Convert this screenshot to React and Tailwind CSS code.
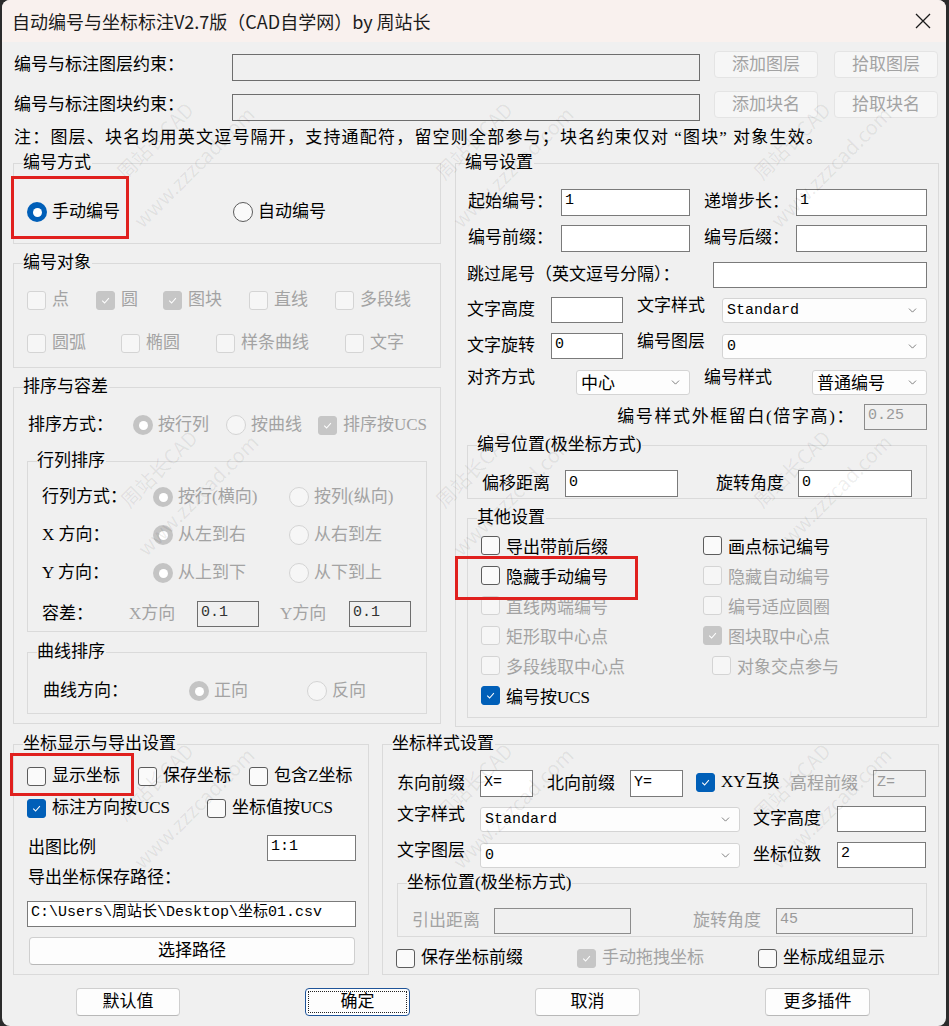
import React from 'react';
import { ChevronDown } from 'lucide-react';

const mono = "font-['Liberation_Mono','Noto_Sans_CJK_SC',monospace]";

function Group({ title, className = '', children }) {
  return (
    <div className={`relative border border-[#dadada] ${className}`}>
      <span className="absolute left-[9px] top-[-13px] bg-[#f0f0f0] pr-[1px] leading-[24px] text-black">{title}</span>
      {children}
    </div>
  );
}

function Check({ label, checked, disabled, className = '' }) {
  const box = checked
    ? disabled
      ? 'border-[#c6c6c6] bg-[#c6c6c6]'
      : 'border-[#005fb8] bg-[#005fb8]'
    : disabled
      ? 'border-[#d4d4d4] bg-[#f6f6f6]'
      : 'border-[#5c5c5c] bg-[#fafafa]';
  return (
    <div className={`flex h-[24px] items-center ${className}`}>
      <span className={`flex h-[19px] w-[19px] shrink-0 items-center justify-center rounded-[3px] border ${box}`}>
        {checked && (
          <svg width="11" height="11" viewBox="0 0 12 12">
            <path d="M2.4 6.2 L5 8.7 L9.7 3.5" fill="none" stroke="white" strokeWidth="1.1" />
          </svg>
        )}
      </span>
      <span className={`ml-[6px] whitespace-nowrap ${disabled ? 'text-[#a3a3a3]' : 'text-black'}`}>{label}</span>
    </div>
  );
}

function Radio({ label, checked, disabled, className = '' }) {
  const ring = checked
    ? disabled
      ? 'bg-[#c4c4c4]'
      : 'bg-[#005fb8]'
    : disabled
      ? 'border border-[#d4d4d4] bg-[#f6f6f6]'
      : 'border border-[#5c5c5c] bg-[#fafafa]';
  return (
    <div className={`flex h-[24px] items-center ${className}`}>
      <span className={`flex h-[20px] w-[20px] shrink-0 items-center justify-center rounded-full ${ring}`}>
        {checked && <span className="h-[9px] w-[9px] rounded-full bg-white" />}
      </span>
      <span className={`ml-[5px] whitespace-nowrap ${disabled ? 'text-[#a3a3a3]' : 'text-black'}`}>{label}</span>
    </div>
  );
}

function Edit({ value = '', className = '', disabled, readOnly }) {
  const tone = disabled
    ? 'border-[#8c8c8c] bg-[#f0f0f0] text-[#9a9a9a]'
    : readOnly
      ? 'border-[#6e6e6e] bg-[#f0f0f0] text-[#333]'
      : 'border-[#7a7a7a] bg-white text-black';
  return (
    <div className={`flex shrink-0 items-center border pb-[2px] pl-[3px] ${mono} text-[15px] ${tone} ${className}`}>
      {value}
    </div>
  );
}

function Combo({ value, cjk, className = '' }) {
  return (
    <div className={`flex shrink-0 items-center justify-between rounded-[3px] border border-[#d4d4d4] bg-[#fdfdfd] pl-[4px] pr-[7px] ${className}`}>
      <span className={cjk ? 'pt-[3px]' : `${mono} pt-[2px] text-[15px]`}>{value}</span>
      <ChevronDown size={13} strokeWidth={1.4} className="text-[#5a5a5a]" />
    </div>
  );
}

function Btn({ children, disabled, focused, className = '' }) {
  const tone = disabled
    ? 'border-[#e4e4e4] bg-[#f6f6f6] text-[#a3a3a3]'
    : focused
      ? 'border-[#1f5499] bg-[#fdfdfd] text-black'
      : 'border-[#cfcfcf] border-b-[#b8b8b8] bg-[#fdfdfd] text-black';
  return (
    <div className={`flex shrink-0 items-center justify-center rounded-[4px] border ${tone} ${className}`}>
      {focused ? (
        <span className="flex h-[calc(100%-4px)] w-[calc(100%-4px)] items-center justify-center border border-dotted border-[#222]">
          {children}
        </span>
      ) : (
        children
      )}
    </div>
  );
}

function Label({ children, className = '', dim }) {
  return <span className={`shrink-0 whitespace-nowrap ${dim ? 'text-[#a3a3a3]' : 'text-black'} ${className}`}>{children}</span>;
}

// faint diagonal site stamp printed over the dialog
function Stamp({ x, y }) {
  return (
    <div
      className="pointer-events-none absolute -translate-x-1/2 -translate-y-1/2 -rotate-45 whitespace-nowrap text-center font-['Noto_Sans_CJK_SC',sans-serif] text-[20px] leading-[24px] text-black/[0.07]"
      style={{ left: x, top: y }}
    >
      <div>周站长CAD</div>
      <div className="mt-[22px] pl-[18px]">www.zzzcad.com</div>
    </div>
  );
}

const stamps = [
  [171, 157], [490, 157], [808, 157],
  [175, 485], [490, 485], [808, 485],
  [171, 798], [490, 798], [808, 798],
];

export default function App() {
  return (
    <div className="relative h-[1026px] w-[949px] overflow-hidden bg-[#2b2b2b] font-['Liberation_Serif','Noto_Sans_CJK_SC',serif] text-[17px] leading-[24px] text-black">
      <div className="ml-[2px] h-full w-[944px] rounded-[8px] bg-[#f0f0f0]">
        {/* title bar */}
        <div className="flex h-[42px] items-center justify-between rounded-t-[8px] bg-[#f9f1ee] pl-[10px] pr-[15px]">
          <span className="font-['Noto_Sans_CJK_SC',sans-serif] text-[18px] text-[#1b1b1b]">
            自动编号与坐标标注V2.7版（CAD自学网）by 周站长
          </span>
          <svg width="16" height="16" viewBox="0 0 16 16">
            <path d="M1 1 L15 15 M15 1 L1 15" stroke="#1b1b1b" strokeWidth="1.3" />
          </svg>
        </div>

        <div className="pl-[11px]">
          {/* layer / block filters */}
          <div className="mt-[9px] flex h-[30px]">
            <Label className="ml-[1px] w-[218px] leading-[27px]">编号与标注图层约束：</Label>
            <Edit readOnly className="mt-[3px] h-[27px] w-[468px]" />
            <Btn disabled className="ml-[14px] h-[27px] w-[104px]">添加图层</Btn>
            <Btn disabled className="ml-[16px] h-[27px] w-[104px]">拾取图层</Btn>
          </div>
          <div className="mt-[10px] flex h-[30px]">
            <Label className="ml-[1px] w-[218px] leading-[27px]">编号与标注图块约束：</Label>
            <Edit readOnly className="mt-[3px] h-[27px] w-[468px]" />
            <Btn disabled className="ml-[14px] h-[27px] w-[104px]">添加块名</Btn>
            <Btn disabled className="ml-[16px] h-[27px] w-[104px]">拾取块名</Btn>
          </div>
          <p className="ml-[1px] mt-[5px] whitespace-nowrap tracking-[1.2px]">
            注：图层、块名均用英文逗号隔开，支持通配符，留空则全部参与；块名约束仅对<span className="mx-[5px]">“图块”</span>对象生效。
          </p>

          <div className="flex">
            {/* left column */}
            <div className="flex w-[428px] flex-col">
              <Group title="编号方式" className="mt-[13px] h-[81px]">
                <div className="flex pl-[13px] pt-[36px]">
                  <Radio checked label="手动编号" className="w-[206px]" />
                  <Radio label="自动编号" />
                </div>
              </Group>

              <Group title="编号对象" className="mt-[19px] h-[105px]">
                <div className="flex pl-[13px] pt-[24px]">
                  <Check disabled label="点" className="w-[69px]" />
                  <Check disabled checked label="圆" className="w-[67px]" />
                  <Check disabled checked label="图块" className="w-[86px]" />
                  <Check disabled label="直线" className="w-[86px]" />
                  <Check disabled label="多段线" />
                </div>
                <div className="mt-[19px] flex pl-[13px]">
                  <Check disabled label="圆弧" className="w-[94px]" />
                  <Check disabled label="椭圆" className="w-[95px]" />
                  <Check disabled label="样条曲线" className="w-[129px]" />
                  <Check disabled label="文字" />
                </div>
              </Group>

              <Group title="排序与容差" className="mt-[19px] h-[337px]">
                <div className="flex pl-[14px] pt-[25px]">
                  <Label className="w-[105px]">排序方式：</Label>
                  <Radio disabled checked label="按行列" className="w-[93px]" />
                  <Radio disabled label="按曲线" className="w-[92px]" />
                  <Check disabled checked label="排序按UCS" />
                </div>

                <Group title="行列排序" className="ml-[13px] mt-[24px] h-[171px] w-[400px]">
                  <div className="flex pl-[14px] pt-[23px]">
                    <Label className="w-[111px]">行列方式：</Label>
                    <Radio disabled checked label="按行(横向)" className="w-[136px]" />
                    <Radio disabled label="按列(纵向)" />
                  </div>
                  <div className="mt-[14px] flex pl-[14px]">
                    <Label className="w-[111px]">X 方向：</Label>
                    <Radio disabled checked label="从左到右" className="w-[136px]" />
                    <Radio disabled label="从右到左" />
                  </div>
                  <div className="mt-[14px] flex pl-[14px]">
                    <Label className="w-[111px]">Y 方向：</Label>
                    <Radio disabled checked label="从上到下" className="w-[136px]" />
                    <Radio disabled label="从下到上" />
                  </div>
                  <div className="mt-[16px] flex items-center pl-[14px]">
                    <Label className="w-[87px]">容差：</Label>
                    <Label dim className="w-[68px]">X方向</Label>
                    <Edit readOnly value="0.1" className="h-[26px] w-[62px]" />
                    <Label dim className="ml-[21px] w-[69px]">Y方向</Label>
                    <Edit readOnly value="0.1" className="h-[26px] w-[62px]" />
                  </div>
                </Group>

                <Group title="曲线排序" className="ml-[13px] mt-[20px] h-[62px] w-[400px]">
                  <div className="flex pl-[15px] pt-[26px]">
                    <Label className="w-[146px]">曲线方向：</Label>
                    <Radio disabled checked label="正向" className="w-[118px]" />
                    <Radio disabled label="反向" />
                  </div>
                </Group>
              </Group>
            </div>

            {/* numbering settings */}
            <Group title="编号设置" className="ml-[14px] mt-[13px] h-[564px] w-[484px]">
              <div className="mt-[24px] flex h-[28px] items-center pl-[12px]">
                <Label className="w-[93px]">起始编号：</Label>
                <Edit value="1" className="h-[27px] w-[129px]" />
                <Label className="ml-[14px] w-[92px]">递增步长：</Label>
                <Edit value="1" className="h-[27px] w-[131px]" />
              </div>
              <div className="mt-[8px] flex h-[28px] items-center pl-[12px]">
                <Label className="w-[93px]">编号前缀：</Label>
                <Edit className="h-[27px] w-[129px]" />
                <Label className="ml-[14px] w-[92px]">编号后缀：</Label>
                <Edit className="h-[27px] w-[131px]" />
              </div>
              <div className="mt-[9px] flex h-[28px] items-center pl-[11px]">
                <Label className="w-[246px]">跳过尾号（英文逗号分隔）：</Label>
                <Edit className="h-[26px] w-[214px]" />
              </div>
              <div className="mt-[7px] flex h-[28px] items-center pl-[11px]">
                <Label className="w-[84px]">文字高度</Label>
                <Edit className="h-[26px] w-[72px]" />
                <Label className="ml-[14px] w-[85px] self-start leading-[20px]">文字样式</Label>
                <Combo value="Standard" className="h-[25px] w-[205px]" />
              </div>
              <div className="mt-[8px] flex h-[28px] items-center pl-[11px]">
                <Label className="w-[84px]">文字旋转</Label>
                <Edit value="0" className="h-[26px] w-[72px]" />
                <Label className="ml-[14px] w-[85px] self-start leading-[20px]">编号图层</Label>
                <Combo value="0" className="h-[25px] w-[205px]" />
              </div>
              <div className="mt-[8px] flex h-[28px] items-center pl-[11px]">
                <Label className="w-[109px] self-start leading-[20px]">对齐方式</Label>
                <Combo cjk value="中心" className="h-[25px] w-[114px]" />
                <Label className="ml-[14px] w-[108px] self-start leading-[20px]">编号样式</Label>
                <Combo cjk value="普通编号" className="h-[25px] w-[115px]" />
              </div>
              <div className="mt-[7px] flex h-[28px] items-center justify-end pr-[11px]">
                <Label className="tracking-[1.6px]">编号样式外框留白(倍字高)：</Label>
                <Edit disabled value="0.25" className="ml-[9px] h-[26px] w-[63px]" />
              </div>

              <Group title="编号位置(极坐标方式)" className="ml-[11px] mt-[14px] h-[54px] w-[460px]">
                <div className="mt-[24px] flex h-[27px] items-center pl-[14px]">
                  <Label className="w-[83px]">偏移距离</Label>
                  <Edit value="0" className="h-[27px] w-[113px]" />
                  <Label className="ml-[38px] w-[82px]">旋转角度</Label>
                  <Edit value="0" className="h-[27px] w-[114px]" />
                </div>
              </Group>

              <Group title="其他设置" className="ml-[11px] mt-[19px] h-[200px] w-[460px]">
                <div className="grid grid-cols-[222px_1fr] pl-[13px] pt-[17px] [&>*]:h-[30px] [&>*]:items-start">
                  <Check label="导出带前后缀" />
                  <Check label="画点标记编号" />
                  <Check label="隐藏手动编号" />
                  <Check disabled label="隐藏自动编号" />
                  <Check disabled label="直线两端编号" />
                  <Check disabled label="编号适应圆圈" />
                  <Check disabled label="矩形取中心点" />
                  <Check disabled checked label="图块取中心点" />
                  <Check disabled label="多段线取中心点" />
                  <Check disabled label="对象交点参与" className="ml-[9px]" />
                  <Check checked label="编号按UCS" />
                </div>
              </Group>
            </Group>
          </div>

          {/* coordinate settings */}
          <div className="mt-[17px] flex">
            <Group title="坐标显示与导出设置" className="h-[231px] w-[356px]">
              <div className="flex pl-[13px] pt-[19px]">
                <Check label="显示坐标" className="w-[111px]" />
                <Check label="保存坐标" className="w-[111px]" />
                <Check label="包含Z坐标" />
              </div>
              <div className="mt-[8px] flex pl-[13px]">
                <Check checked label="标注方向按UCS" className="w-[180px]" />
                <Check label="坐标值按UCS" />
              </div>
              <div className="mt-[15px] flex items-center pl-[14px]">
                <Label className="w-[239px]">出图比例</Label>
                <Edit value="1:1" className="h-[26px] w-[89px]" />
              </div>
              <p className="ml-[14px] mt-[5px]">导出坐标保存路径：</p>
              <Edit value="C:\Users\周站长\Desktop\坐标01.csv" className="ml-[13px] mt-[11px] h-[26px] w-[329px]" />
              <Btn className="ml-[15px] mt-[10px] h-[28px] w-[326px]">选择路径</Btn>
            </Group>

            <Group title="坐标样式设置" className="ml-[13px] h-[231px] w-[557px]">
              <div className="mt-[25px] flex h-[27px] items-center pl-[14px]">
                <Label className="w-[83px]">东向前缀</Label>
                <Edit value="X=" className="h-[27px] w-[53px]" />
                <Label className="ml-[14px] w-[83px]">北向前缀</Label>
                <Edit value="Y=" className="h-[27px] w-[53px]" />
                <Check checked label="XY互换" className="ml-[13px] w-[94px] self-start" />
                <Label dim className="w-[83px]">高程前缀</Label>
                <Edit disabled value="Z=" className="h-[27px] w-[53px]" />
              </div>
              <div className="mt-[9px] flex h-[26px] items-center pl-[14px]">
                <Label className="w-[83px] self-start leading-[18px]">文字样式</Label>
                <Combo value="Standard" className="h-[25px] w-[260px]" />
                <Label className="ml-[13px] w-[84px]">文字高度</Label>
                <Edit className="h-[26px] w-[89px]" />
              </div>
              <div className="mt-[10px] flex h-[26px] items-center pl-[14px]">
                <Label className="w-[83px] self-start leading-[18px]">文字图层</Label>
                <Combo value="0" className="h-[25px] w-[260px]" />
                <Label className="ml-[13px] w-[84px]">坐标位数</Label>
                <Edit value="2" className="h-[26px] w-[89px]" />
              </div>

              <Group title="坐标位置(极坐标方式)" className="ml-[14px] mt-[15px] h-[54px] w-[530px]">
                <div className="mt-[24px] flex h-[26px] items-center pl-[14px]">
                  <Label dim className="w-[82px]">引出距离</Label>
                  <Edit disabled className="h-[26px] w-[137px]" />
                  <Label dim className="ml-[62px] w-[83px]">旋转角度</Label>
                  <Edit disabled value="45" className="h-[26px] w-[137px]" />
                </div>
              </Group>

              <div className="mt-[9px] flex pl-[13px]">
                <Check label="保存坐标前缀" className="w-[181px]" />
                <Check disabled checked label="手动拖拽坐标" className="w-[181px]" />
                <Check label="坐标成组显示" />
              </div>
            </Group>
          </div>

          {/* dialog buttons */}
          <div className="mt-[13px] flex h-[28px]">
            <Btn className="ml-[63px] h-[28px] w-[104px]">默认值</Btn>
            <Btn focused className="ml-[125px] h-[28px] w-[105px]">确定</Btn>
            <Btn className="ml-[125px] h-[28px] w-[105px]">取消</Btn>
            <Btn className="ml-[125px] h-[28px] w-[105px]">更多插件</Btn>
          </div>
        </div>
      </div>

      {stamps.map(([x, y]) => (
        <Stamp key={`${x}-${y}`} x={x} y={y} />
      ))}

      {/* red call-out frames */}
      <div className="pointer-events-none absolute left-[11px] top-[176px] h-[63px] w-[118px] border-[3px] border-[#e0201e]" />
      <div className="pointer-events-none absolute left-[455px] top-[556px] h-[44px] w-[183px] border-[3px] border-[#e0201e]" />
      <div className="pointer-events-none absolute left-[10px] top-[753px] h-[43px] w-[124px] border-[3px] border-[#e0201e]" />
    </div>
  );
}
